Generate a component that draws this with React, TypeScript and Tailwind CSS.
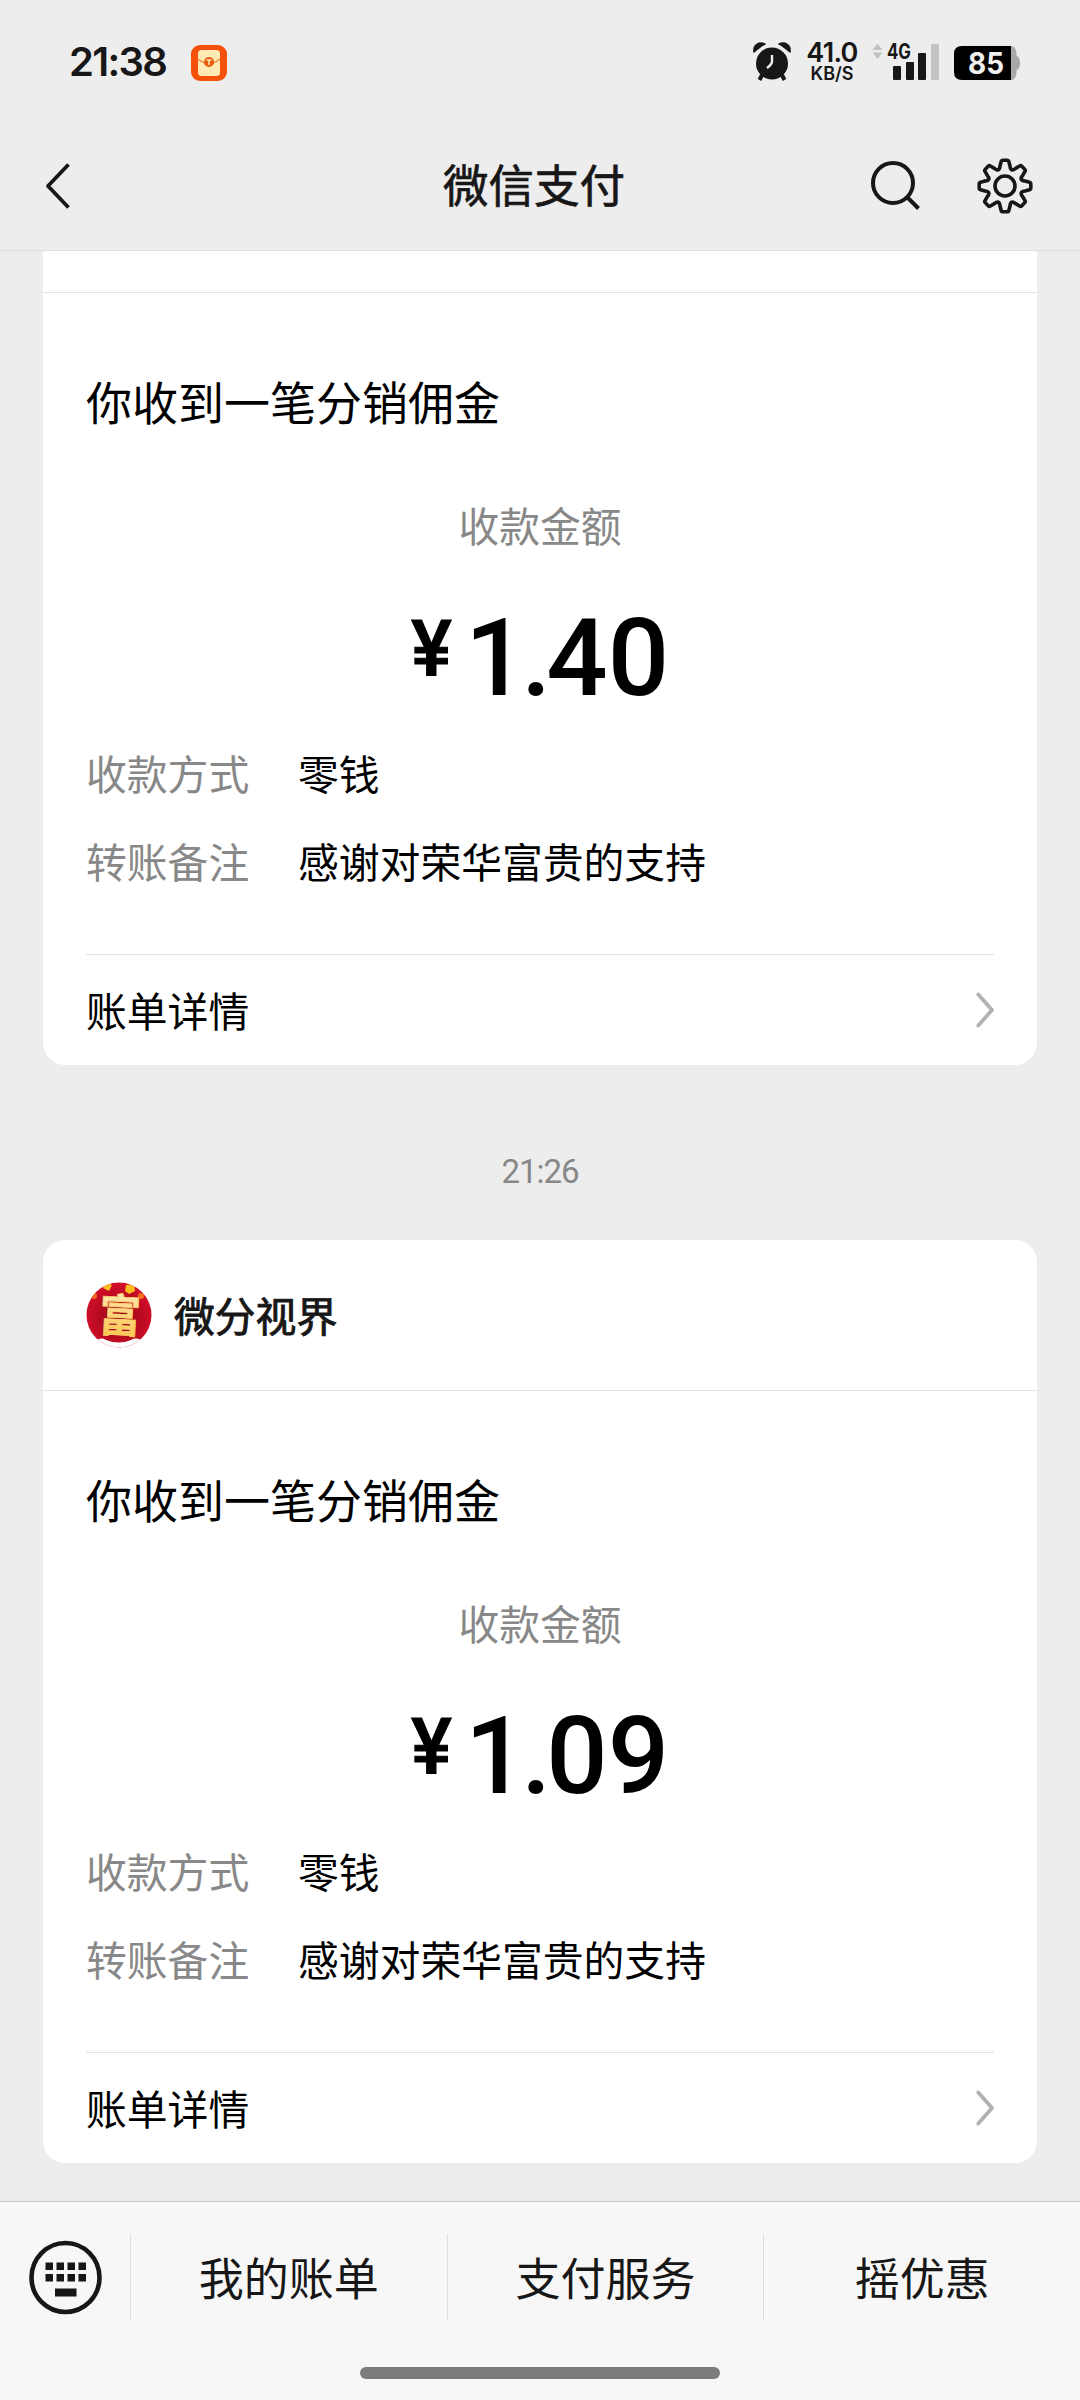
const bills = [
    { id: 1, amount: ["1.", "40"] },
    { id: 2, amount: ["1.", "09"] }
]

const menus = ["我的账单", "支付服务", "摇优惠"]

const StatusBar = () => (
    <div className="h-[122px] shrink-0 pl-[69px] flex text-[#171717]">
        <div className="mt-[38px] w-[122px] text-[40px] leading-[48px] tracking-[-1.7px] font-['Inter'] font-semibold">21:38</div>
        <svg className="mt-[45px]" width="36" height="36" viewBox="0 0 36 36">
            <rect width="36" height="36" rx="9" fill="#f4520a" />
            <rect x="7" y="5" width="22" height="26" rx="3.5" fill="#ffe9b4" />
            <path d="M7 14Q18 23 29 14" fill="none" stroke="#f08a3c" strokeWidth="1.5" />
            <circle cx="18" cy="17" r="5" fill="#ea5a10" />
            <path d="M15.5 15H20.5M18 15V20" stroke="#ffe9b4" strokeWidth="1.5" />
        </svg>
        <svg className="ml-[526px] mt-[42px]" width="38" height="40" viewBox="0 0 38 40">
            <circle cx="19" cy="21.5" r="16" fill="#171717" />
            <path d="M9 33L6.5 38M29 33L31.5 38" stroke="#171717" strokeWidth="4" />
            <path d="M1 10C0 3 6 -1 12 2C9 3 5 6.5 1 10ZM37 10C38 3 32 -1 26 2C29 3 33 6.5 37 10Z" fill="#171717" stroke="#171717" strokeWidth="1.5" strokeLinejoin="round" />
            <path d="M19 13V20Q18.5 22.5 14 26" fill="none" stroke="#ededed" strokeWidth="2.4" />
        </svg>
        <div className="ml-[12px] mt-[42px] w-[58px] text-center font-['Inter'] font-semibold">
            <div className="text-[27px] leading-[22px] tracking-[-0.7px]">41.0</div>
            <div className="text-[18px] leading-[19px]">KB/S</div>
        </div>
        <svg className="ml-[10px] mt-[42px]" width="70" height="40" viewBox="0 0 70 40">
            <path d="M1.5 8L6.5 1.5L11.5 8ZM1.5 10.5L6.5 17L11.5 10.5Z" fill="#c2c2c2" />
            <text x="16" y="17" fontSize="21" fontWeight="700" fontFamily="Inter" textLength="24" lengthAdjust="spacingAndGlyphs" fill="#171717">4G</text>
            <rect x="22" y="24" width="8" height="14" rx="1" fill="#171717" />
            <rect x="35" y="20" width="8" height="18" rx="1" fill="#171717" />
            <rect x="47" y="11" width="8" height="27" rx="1" fill="#171717" />
            <rect x="60" y="2" width="8" height="36" rx="1" fill="#c2c2c2" />
        </svg>
        <svg className="ml-[12px] mt-[45px]" width="68" height="36" viewBox="0 0 68 36">
            <path d="M57 1H58Q62 1 63.5 7V11Q67 12 67 18Q67 24 63.5 25V29Q62 35 58 35H57Z" fill="#a9a9a9" />
            <path d="M9 1H58V35H9Q1 35 1 27V9Q1 1 9 1Z" fill="#000" />
            <text x="33" y="29" textAnchor="middle" fontSize="30" fontWeight="700" fontFamily="Inter" textLength="36" lengthAdjust="spacingAndGlyphs" fill="#f0f0f0">85</text>
        </svg>
    </div>
)

const teeth = [0, 45, 90, 135, 180, 225, 270, 315]

const point = (x: number, y: number, deg: number) => {
    const a = (deg * Math.PI) / 180
    return `${(30 + x * Math.cos(a) - y * Math.sin(a)).toFixed(2)} ${(30 + x * Math.sin(a) + y * Math.cos(a)).toFixed(2)}`
}

// one tooth and the valley after it, repeated round the wheel
const gearPath = teeth.map((deg, i) =>
    `${i === 0 ? "M" : "L"}${point(-5, -20, deg)} L${point(-3.8, -24.5, deg)} Q${point(-3.5, -25.8, deg)} ${point(-2, -25.8, deg)} L${point(2, -25.8, deg)} Q${point(3.5, -25.8, deg)} ${point(3.8, -24.5, deg)} L${point(5, -20, deg)} Q${point(0, -14.8, deg + 22.5)} ${point(-5, -20, deg + 45)}`
).join(" ") + "Z"

const NavBar = () => (
    <div className="h-[128px] shrink-0 pl-[43px] pr-[45px] flex items-center">
        <svg width="158" height="50" viewBox="0 0 158 50" fill="none" stroke="#171717" strokeWidth="3.8" strokeLinejoin="round">
            <path d="M25.5 3.5L5 25L25.5 46.5" />
        </svg>
        <h1 className="flex-1 pb-[6px] text-center text-[45.5px] text-[#171717] [-webkit-text-stroke:0.7px_#171717]">微信支付</h1>
        <div className="w-[168px] flex items-center justify-end gap-[54px]">
            <svg width="54" height="54" viewBox="0 0 54 54" fill="none" stroke="#171717" strokeWidth="4">
                <circle cx="26" cy="24" r="20" />
                <path d="M40.5 38.5L51.5 49.5" />
            </svg>
            <svg width="60" height="60" viewBox="0 0 60 60" fill="none" stroke="#171717" strokeWidth="3.6" strokeLinejoin="round">
                <path d={gearPath} />
                <circle cx="30" cy="30" r="10" />
            </svg>
        </div>
    </div>
)

const Avatar = () => (
    <svg className="block" width="66" height="66" viewBox="0 0 66 66">
        <defs>
            <radialGradient id="red" cx="50%" cy="55%" r="60%">
                <stop offset="0" stopColor="#8f0610" />
                <stop offset="1" stopColor="#dc0f2e" />
            </radialGradient>
            <linearGradient id="gold" x1="0" y1="0" x2="0" y2="1">
                <stop offset="0" stopColor="#fff0c8" />
                <stop offset="1" stopColor="#fbc040" />
            </linearGradient>
            <clipPath id="round">
                <circle cx="33" cy="33" r="32.5" />
            </clipPath>
        </defs>
        <g clipPath="url(#round)">
            <rect width="66" height="66" fill="url(#red)" />
            <path d="M19 0L26 3L23 9L17 6ZM40 3L48 2L49 9L43 12L39 9Z" fill="#fbbd20" />
            <circle cx="8" cy="14" r="3" fill="#ee6a1c" />
            <circle cx="55" cy="14" r="3" fill="#f3701c" />
            <path d="M8 61Q14 54 20 58Q33 63 45 58Q52 54 58 61V66H8Z" fill="#fff" />
        </g>
        <text x="37" y="50" textAnchor="middle" fontSize="45" fontWeight="700" fontFamily="Noto Sans CJK SC" transform="rotate(3 33 33) scale(0.92 1)" fill="url(#gold)" stroke="#fbd070" strokeWidth="0.8">富</text>
    </svg>
)

const Row = ({ label, value }: { label: string; value: string }) => (
    <div className="h-[64px] pb-[3px] flex items-center text-[40.8px]">
        <span className="w-[212px] text-[#888]">{label}</span>
        <span className="text-black">{value}</span>
    </div>
)

const BillBody = ({ amount }: { amount: string[] }) => (
    <>
        <div className="h-px bg-[#e3e3e3]"></div>
        <div className="px-[43px]">
            <p className="mt-[75px] h-[64px] leading-[64px] text-[46px] text-black">你收到一笔分销佣金</p>
            <p className="mt-[61px] h-[64px] leading-[64px] text-center text-[40.8px] text-[#888]">收款金额</p>
            <div className="mt-[47px] h-[108px] flex justify-center font-['Roboto'] font-medium text-black">
                <span className="mt-[7px] text-[77px] leading-[77px] mr-[13px] [-webkit-text-stroke:1px_black]">¥</span>
                <span className="text-[108px] leading-[108px] tracking-[-5px]">{amount[0]}</span>
                <span className="text-[108px] leading-[108px]">{amount[1]}</span>
            </div>
            <div className="mt-[30px] flex flex-col gap-6">
                <Row label="收款方式" value="零钱" />
                <Row label="转账备注" value="感谢对荣华富贵的支持" />
            </div>
        </div>
        <div className="mx-[43px] mt-[60px] h-px bg-[#e3e3e3]"></div>
        <div className="h-[110px] px-[43px] flex items-center justify-between text-[40.8px] text-black">
            <span>账单详情</span>
            <svg width="18" height="36" viewBox="0 0 18 36" fill="none" stroke="#b2b2b2" strokeWidth="3.8" strokeLinecap="round" strokeLinejoin="round">
                <path d="M2.3 2.5L16 18L2.3 33.5" />
            </svg>
        </div>
    </>
)

const BottomBar = () => (
    <div className="h-[199px] shrink-0 border-t border-[#c6c6c6] bg-[#f7f7f7] flex flex-col items-center">
        <div className="w-full h-[148px] pt-[2px] flex items-center">
            <div className="w-[130px] pl-[29px]">
                <svg width="73" height="75" viewBox="0 0 73 75" fill="#171717">
                    <ellipse cx="36.5" cy="37.5" rx="34" ry="34.5" fill="none" stroke="#171717" strokeWidth="4.6" />
                    {[16.5, 27.5, 38.5, 49.5].map(x => (
                        <g key={x}>
                            <rect x={x} y="22.5" width="7.5" height="7.5" />
                            <rect x={x} y="34" width="7.5" height="7.5" />
                        </g>
                    ))}
                    <rect x="26" y="48.5" width="21.5" height="8" />
                </svg>
            </div>
            {menus.map(menu => (
                <div key={menu} className="flex-1 h-[86px] border-l border-[#dedede] flex items-center justify-center text-[45px] text-[#171717]">
                    {menu}
                </div>
            ))}
        </div>
        <div className="mt-[17px] w-[360px] h-3 rounded-full bg-[#7b7b7b]"></div>
    </div>
)

const App = () => {
    return (
        <div className="w-[1080px] h-[2400px] overflow-hidden bg-[#ededed] flex flex-col font-['Noto_Sans_CJK_SC',sans-serif]">
            <StatusBar />
            <NavBar />
            <div className="h-[1951px] shrink-0 border-t border-[#dfdfdf] px-[43px]">
                <div className="bg-white rounded-b-[22px] pt-[41px]">
                    <BillBody amount={bills[0].amount} />
                </div>
                <div className="h-[175px] flex items-center justify-center font-['Roboto'] text-[33px] tracking-[-1px] text-[#888]">
                    <span className="pt-[39px]">21:26</span>
                </div>
                <div className="bg-white rounded-[22px]">
                    <div className="h-[150px] pl-[43px] flex items-center">
                        <Avatar />
                        <span className="ml-[22px] text-[40.8px] text-[#171717] [-webkit-text-stroke:0.9px_#171717]">微分视界</span>
                    </div>
                    <BillBody amount={bills[1].amount} />
                </div>
            </div>
            <BottomBar />
        </div>
    )
}

export default App
